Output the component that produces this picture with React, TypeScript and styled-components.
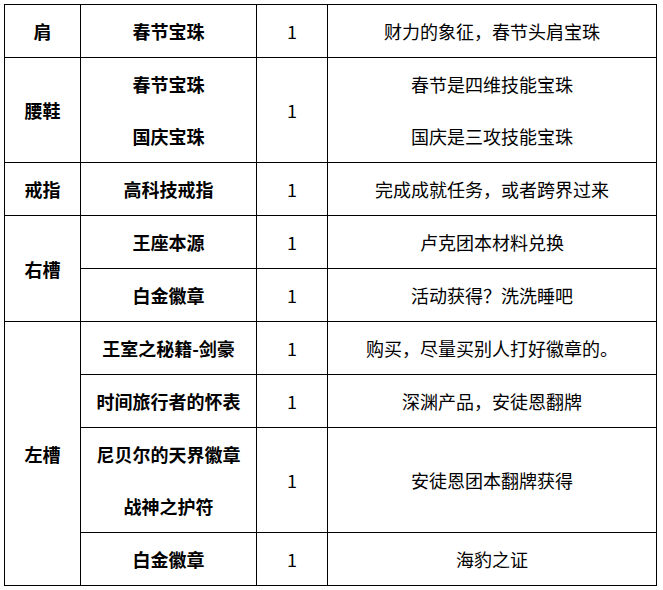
import styled, { createGlobalStyle } from "styled-components";

const GlobalStyle = createGlobalStyle`
  html, body {
    margin: 0;
    padding: 0;
    background: #ffffff;
  }
  body {
    font-family: "Noto Sans CJK SC", "Noto Sans", sans-serif;
    color: #000000;
  }
`;

type Item = {
  names: string[];
  count: string;
  notes: string[];
};

type Group = {
  slot: string;
  items: Item[];
};

const groups: Group[] = [
  {
    slot: "肩",
    items: [{ names: ["春节宝珠"], count: "1", notes: ["财力的象征，春节头肩宝珠"] }],
  },
  {
    slot: "腰鞋",
    items: [
      {
        names: ["春节宝珠", "国庆宝珠"],
        count: "1",
        notes: ["春节是四维技能宝珠", "国庆是三攻技能宝珠"],
      },
    ],
  },
  {
    slot: "戒指",
    items: [{ names: ["高科技戒指"], count: "1", notes: ["完成成就任务，或者跨界过来"] }],
  },
  {
    slot: "右槽",
    items: [
      { names: ["王座本源"], count: "1", notes: ["卢克团本材料兑换"] },
      { names: ["白金徽章"], count: "1", notes: ["活动获得？洗洗睡吧"] },
    ],
  },
  {
    slot: "左槽",
    items: [
      { names: ["王室之秘籍-剑豪"], count: "1", notes: ["购买，尽量买别人打好徽章的。"] },
      { names: ["时间旅行者的怀表"], count: "1", notes: ["深渊产品，安徒恩翻牌"] },
      { names: ["尼贝尔的天界徽章", "战神之护符"], count: "1", notes: ["安徒恩团本翻牌获得"] },
      { names: ["白金徽章"], count: "1", notes: ["海豹之证"] },
    ],
  },
];

export default function App() {
  return (
    <Page>
      <GlobalStyle />
      <Table>
        <colgroup>
          <col style={{ width: "76px" }} />
          <col style={{ width: "176px" }} />
          <col style={{ width: "71px" }} />
          <col style={{ width: "329px" }} />
        </colgroup>
        <tbody>
          {groups.map((group) =>
            group.items.map((item, i) => (
              <Row key={group.slot + i} $lines={item.names.length}>
                {i === 0 && (
                  <Cell $bold rowSpan={group.items.length}>
                    {group.slot}
                  </Cell>
                )}
                <Cell $bold>
                  {item.names.map((n) => (
                    <Line key={n}>{n}</Line>
                  ))}
                </Cell>
                <Cell>{item.count}</Cell>
                <Cell>
                  {item.notes.map((n) => (
                    <Line key={n}>{n}</Line>
                  ))}
                </Cell>
              </Row>
            ))
          )}
        </tbody>
      </Table>
    </Page>
  );
}

const Page = styled.div`
  padding: 4px 0 0 4px;
`;

const Table = styled.table`
  border-collapse: collapse;
  table-layout: fixed;
  width: 653px;
`;

const Row = styled.tr<{ $lines: number }>`
  height: ${(p) => p.$lines * 52 + (p.$lines - 1)}px;
`;

const Cell = styled.td<{ $bold?: boolean }>`
  border: 1px solid #000000;
  padding: 0;
  text-align: center;
  vertical-align: middle;
  font-size: 18px;
  font-weight: ${(p) => (p.$bold ? 700 : 400)};
  line-height: 24px;
`;

const Line = styled.div`
  height: 52px;
  display: flex;
  align-items: center;
  justify-content: center;
`;
